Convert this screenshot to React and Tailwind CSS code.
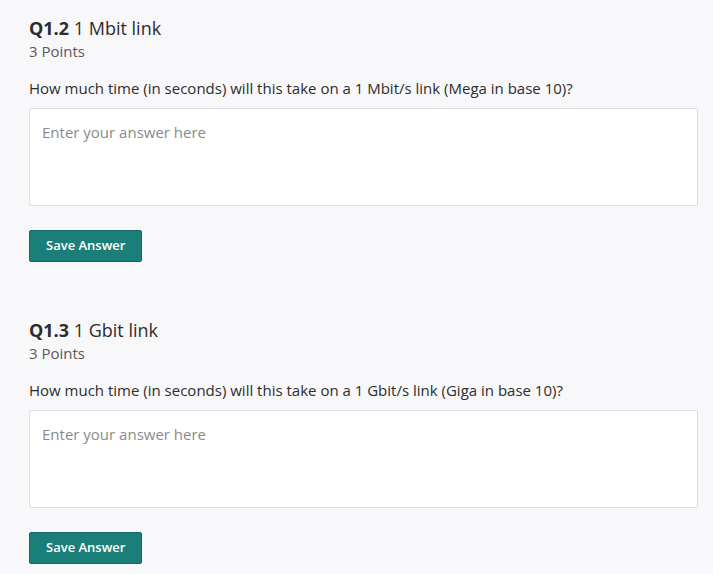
import React from "react";

const questions = [
  {
    id: "Q1.2",
    title: "1 Mbit link",
    points: "3 Points",
    prompt: "How much time (in seconds) will this take on a 1 Mbit/s link (Mega in base 10)?",
  },
  {
    id: "Q1.3",
    title: "1 Gbit link",
    points: "3 Points",
    prompt: "How much time (in seconds) will this take on a 1 Gbit/s link (Giga in base 10)?",
  },
];

const Question = ({ q }) => (
  <div className="pb-[56px]">
    <h3 className="text-[18px] leading-[24px] text-[#2d2d2d]">
      <span className="font-bold">{q.id}</span> {q.title}
    </h3>
    <p className="mt-[1px] text-[15px] leading-[20px] text-[#595959]">{q.points}</p>
    <p className="mt-[17px] text-[15px] leading-[20px] text-[#2d2d2d]">{q.prompt}</p>
    <textarea
      className="mt-[10px] block w-full h-[98px] bg-white border border-[#dcdce2] rounded-[2px] px-[12px] py-[13px] text-[15px] leading-[20px] text-[#333] placeholder:text-[#8a8a8a] resize-none outline-none"
      placeholder="Enter your answer here"
    />
    <button className="mt-[24px] h-[32px] px-[16px] bg-[#1b7f79] border border-[#146660] rounded-[2px] text-white text-[13px] font-semibold">
      Save Answer
    </button>
  </div>
);

export default function App() {
  return (
    <div
      className="min-h-screen bg-[#f8f8fa] pl-[29px] pr-[15px] pt-[16px]"
      style={{ fontFamily: "'Open Sans', 'Liberation Sans', sans-serif" }}
    >
      {questions.map((q) => (
        <Question key={q.id} q={q} />
      ))}
    </div>
  );
}
